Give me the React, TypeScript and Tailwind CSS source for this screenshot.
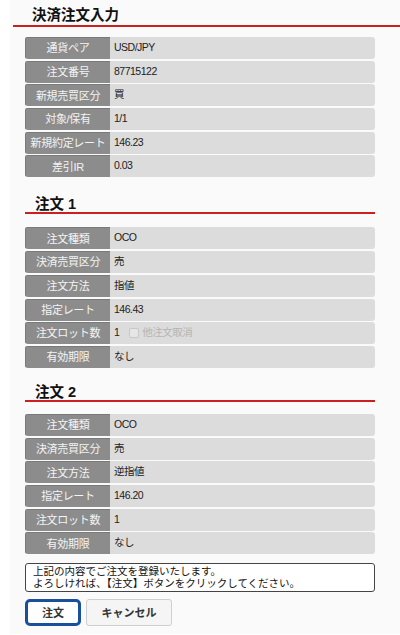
import React from "react";

const font = { fontFamily: '"Liberation Sans", "Noto Sans CJK JP", sans-serif' };

type Row = { label: string; value: React.ReactNode };

const summary: Row[] = [
  { label: "通貨ペア", value: "USD/JPY" },
  { label: "注文番号", value: "87715122" },
  { label: "新規売買区分", value: "買" },
  { label: "対象/保有", value: "1/1" },
  { label: "新規約定レート", value: "146.23" },
  { label: "差引IR", value: "0.03" },
];

const order1: Row[] = [
  { label: "注文種類", value: "OCO" },
  { label: "決済売買区分", value: "売" },
  { label: "注文方法", value: "指値" },
  { label: "指定レート", value: "146.43" },
  {
    label: "注文ロット数",
    value: (
      <span className="flex items-center">
        1
        <span className="ml-[10px] inline-block w-[10px] h-[10px] border border-[#c8c8c8] bg-[#e6e6e6] rounded-[2px]" />
        <span className="ml-[3px] text-[#b4b4b4]">他注文取消</span>
      </span>
    ),
  },
  { label: "有効期限", value: "なし" },
];

const order2: Row[] = [
  { label: "注文種類", value: "OCO" },
  { label: "決済売買区分", value: "売" },
  { label: "注文方法", value: "逆指値" },
  { label: "指定レート", value: "146.20" },
  { label: "注文ロット数", value: "1" },
  { label: "有効期限", value: "なし" },
];

function Table({ rows }: { rows: Row[] }) {
  return (
    <div className="flex flex-col gap-[1.7px]">
      {rows.map((r) => (
        <div key={r.label} className="flex h-[22px] rounded-[3px] overflow-hidden">
          <div className="w-[85px] shrink-0 bg-[#8c8c8c] border-l border-t border-[#7a7a7a] text-[#f4f4f4] text-[11px] flex items-center justify-center tracking-[-0.3px]">
            {r.label}
          </div>
          <div className="flex-1 bg-[#dcdcdc] text-[#222] text-[10.5px] pl-[4px] pt-[3px] tracking-[-0.5px]">
            {r.value}
          </div>
        </div>
      ))}
    </div>
  );
}

function Heading({ children }: { children: React.ReactNode }) {
  return (
    <div className="border-b-2 border-[#cc1f1f] pl-[10px] h-[21px] pt-[2px] text-[14.5px] font-bold text-[#111] leading-[18px]">
      {children}
    </div>
  );
}

export default function App() {
  return (
    <div className="w-[400px] h-[635px] bg-white" style={font}>
      <div className="ml-[10px] h-[634px] bg-[#fafafa] pt-[4px]">
        <div className="ml-[3px] border-b-2 border-[#cc1f1f] pl-[19px] h-[23px] pt-[2px] text-[14.5px] font-bold text-[#111] leading-[18px]">
          決済注文入力
        </div>
        <div className="ml-[15px] w-[350px] mt-[10px]">
          <Table rows={summary} />

          <div className="mt-[16px]">
            <Heading>注文 1</Heading>
          </div>
          <div className="mt-[13px]">
            <Table rows={order1} />
          </div>

          <div className="mt-[13px]">
            <Heading>注文 2</Heading>
          </div>
          <div className="mt-[12px]">
            <Table rows={order2} />
          </div>

          <div className="mt-[9px] h-[29px] border border-[#444] rounded-[3px] bg-white pl-[7px] text-[10.5px] leading-[12px] pt-[1px] text-[#111]">
            <div>上記の内容でご注文を登録いたします。</div>
            <div>よろしければ、【注文】ボタンをクリックしてください。</div>
          </div>

          <div className="mt-[7px] flex gap-[5px]">
            <button className="w-[56px] h-[27px] border-[3px] border-[#1a4f9c] rounded-[5px] bg-white text-[11px] font-bold text-[#333]">
              注文
            </button>
            <button className="w-[86px] h-[27px] border border-[#cfcfcf] rounded-[3px] bg-[#f5f5f5] text-[11px] font-bold text-[#333]">
              キャンセル
            </button>
          </div>
        </div>
      </div>
    </div>
  );
}
